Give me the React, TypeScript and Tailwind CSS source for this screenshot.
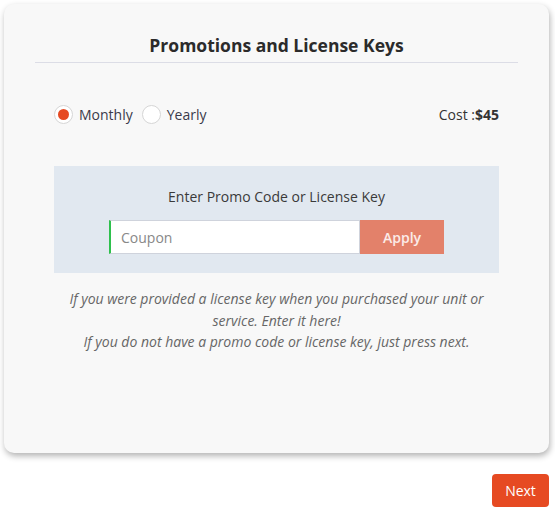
import React, { useState } from 'react';

export default function App() {
  const [plan, setPlan] = useState<'monthly' | 'yearly'>('monthly');
  const [code, setCode] = useState('');

  return (
    <div className="w-[555px] h-[510px] bg-white font-['Open_Sans',sans-serif] text-[#333]">
      <div className="pt-[4px] pl-[4px]">
        {/* Main card */}
        <div className="w-[545px] h-[449px] bg-[#f8f8f8] rounded-[10px] shadow-[1px_3px_6px_rgba(0,0,0,0.3)] px-[31px] pt-[29px]">
          <h2 className="text-center text-[17.5px] leading-[24px] font-bold text-[#2b2b2b] pb-[5px] border-b border-[#dcdde6]">
            Promotions and License Keys
          </h2>

          <div className="px-[19px]">
            {/* Plan selector */}
            <div className="flex items-center justify-between mt-[41px] h-[20px]">
              <div className="flex items-center text-[14px]">
                <button onClick={() => setPlan('monthly')} className="flex items-center cursor-pointer">
                  <span className="w-[19px] h-[19px] rounded-full border border-[#d6d6d6] bg-white flex items-center justify-center">
                    {plan === 'monthly' && <span className="w-[11px] h-[11px] rounded-full bg-[#e64a22]" />}
                  </span>
                  <span className="ml-[6px] text-[#3a3a4a]">Monthly</span>
                </button>
                <button onClick={() => setPlan('yearly')} className="flex items-center ml-[9px] cursor-pointer">
                  <span className="w-[19px] h-[19px] rounded-full border border-[#d6d6d6] bg-white flex items-center justify-center">
                    {plan === 'yearly' && <span className="w-[11px] h-[11px] rounded-full bg-[#e64a22]" />}
                  </span>
                  <span className="ml-[6px] text-[#3a3a4a]">Yearly</span>
                </button>
              </div>
              <div className="text-[14px] text-[#333]">
                Cost :<span className="font-bold">$45</span>
              </div>
            </div>

            {/* Promo box */}
            <div className="mt-[42px] h-[107px] bg-[#e1e8f0] pt-[21px] flex flex-col items-center">
              <div className="text-[14px] leading-[20px] text-[#3a3a3a]">Enter Promo Code or License Key</div>
              <div className="flex mt-[13px]">
                <input
                  value={code}
                  onChange={(e) => setCode(e.target.value)}
                  placeholder="Coupon"
                  className="w-[251px] h-[34px] bg-white border border-[#cfd3dc] border-l-[2px] border-l-[#2ec04d] px-[10px] text-[14px] text-[#555] placeholder:text-[#888] outline-none"
                />
                <button className="w-[84px] h-[34px] bg-[#e3816a] text-white/85 text-[14px] font-semibold">
                  Apply
                </button>
              </div>
            </div>

            <p className="mt-[15px] text-center italic text-[14px] leading-[21.5px] text-[#666]">
              If you were provided a license key when you purchased your unit or service. Enter it here!
              <br />
              If you do not have a promo code or license key, just press next.
            </p>
          </div>
        </div>
      </div>

      <div className="flex justify-end pr-[6px] mt-[21px]">
        <button className="w-[57px] h-[33px] rounded-[4px] bg-[#e64a22] text-white text-[14px]">Next</button>
      </div>
    </div>
  );
}
